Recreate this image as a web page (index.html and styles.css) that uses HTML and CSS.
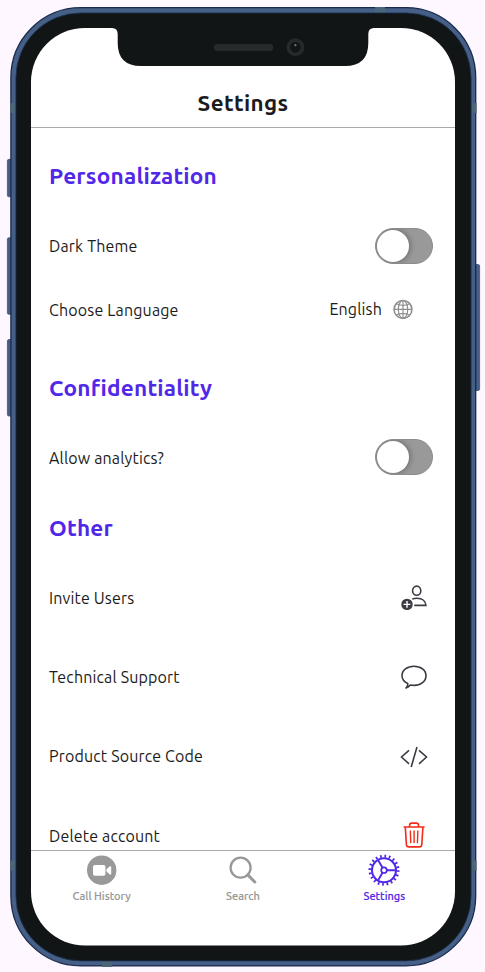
FILE: index.html
```html
<!DOCTYPE html>
<html lang="en">
<head>
<meta charset="utf-8">
<title>Settings</title>
<link rel="stylesheet" href="styles.css">
</head>
<body>
<div class="device">
  <svg class="frame" width="485" height="972" viewBox="0 0 485 972">
    <g fill="#455f86" stroke="#34496b" stroke-width=".7">
      <rect x="7.4" y="159.3" width="6" height="37.5" rx="1.5"/>
      <rect x="7.4" y="237.7" width="6" height="76.6" rx="1.5"/>
      <rect x="7.4" y="339.5" width="6" height="76.6" rx="1.5"/>
      <rect x="473" y="264.5" width="6.6" height="126" rx="1.5"/>
    </g>
    <rect x="10.9" y="7.7" width="464.8" height="958.2" rx="70" fill="#455f86" stroke="#182a4b" stroke-width="1.3"/>
    <g fill="#4b6579">
      <rect x="10.3" y="103" width="6" height="10"/><rect x="471" y="103" width="5.6" height="10"/>
      <rect x="10.3" y="860.5" width="6" height="10"/><rect x="471" y="860.5" width="5.6" height="10"/>
      <rect x="375" y="7" width="10" height="6"/><rect x="102" y="961" width="10" height="6"/>
    </g>
    <rect x="15.9" y="12.9" width="455.2" height="948" rx="65" fill="#111515" stroke="#20365a" stroke-width=".8"/>
    <rect x="31" y="28" width="424" height="917.5" rx="54" fill="#fff"/>
    <path d="M111 27.5V28h1Q117.7 28 117.7 34V43Q117.7 66 141 66H345Q368.3 66 368.3 43V34Q368.3 28 374 28V27.5Z" fill="#111515"/>
    <rect x="213.8" y="44" width="59.4" height="7" rx="3.5" fill="#262a2a"/>
    <circle cx="295.4" cy="47.2" r="7.1" fill="#111515" stroke="#262a2a" stroke-width="3.6"/>
    <circle cx="295.4" cy="45.2" r="1.1" fill="#777"/>
  </svg>
  <div class="screen">
    <header class="header"><h1 class="title">Settings</h1></header>
    <main class="content">
      <h2 class="section">Personalization</h2>
      <div class="row"><span class="label">Dark Theme</span><span class="switch"><i class="thumb"></i></span></div>
      <div class="row lang"><span class="label">Choose Language</span>
        <span class="value"><span class="label">English</span>
          <svg width="20" height="20" viewBox="0 0 20 20" fill="none" stroke="#8f8f8f" stroke-width="1.2"><circle cx="10" cy="10.4" r="8.9" stroke-width="1.6"/><ellipse cx="10" cy="10.4" rx="4.7" ry="8.9"/><path d="M10 1.4V19.4M1 10.4H19M3.3 4.8Q10 8 16.7 4.8M3.3 16Q10 12.8 16.7 16"/></svg>
        </span></div>
      <h2 class="section">Confidentiality</h2>
      <div class="row analytics"><span class="label low">Allow analytics?</span><span class="switch"><i class="thumb"></i></span></div>
      <h2 class="section other">Other</h2>
      <div class="row link"><span class="label">Invite Users</span>
        <svg width="28" height="28" viewBox="0 0 28 28" fill="none" stroke="#3d3a43" stroke-width="1.6"><ellipse cx="16.7" cy="6.7" rx="4.1" ry="4.6"/><path d="M12.2 15.1Q14 14.2 17 14.2C22.5 14.2 25.6 17.5 25.9 21.4H14.2"/><circle cx="7" cy="20.4" r="5.7" fill="#3d3a43" stroke="none"/><path d="M7 17V23.8M3.6 20.4H10.4" stroke="#fff" stroke-width="1.4"/></svg></div>
      <div class="row link"><span class="label">Technical Support</span>
        <svg width="28" height="28" viewBox="0 0 28 28" fill="none" stroke="#3d3a43" stroke-width="1.6" stroke-linejoin="round"><path d="M7.8 20.6C4.3 19 2 16.4 2 12.8 2 7.2 7.2 3.2 14 3.2S26 7.2 26 12.8 20.8 22.4 14 22.4Q12 22.4 10.3 22Q8.7 24 6 24.9Q7.9 23.3 7.8 20.6Z"/></svg></div>
      <div class="row link"><span class="label">Product Source Code</span>
        <svg width="28" height="28" viewBox="0 0 28 28" fill="none" stroke="#3d3a43" stroke-width="1.6"><path d="M9 8.4 1.5 15 9 21.8M19 8.4 26.5 15 19 21.8M17 5 11.2 25"/></svg></div>
      <div class="row link"><span class="label low">Delete account</span>
        <svg width="28" height="28" viewBox="0 0 28 28" fill="none" stroke="#f42b18" stroke-width="1.6" stroke-linejoin="round"><path d="M3.6 6H24.6M9.6 5.8V4.2Q9.6 2.1 11.7 2.1H16.4Q18.5 2.1 18.5 4.2V5.8M5.3 6.2 6.4 23.6Q6.6 25.9 8.8 25.9H19.4Q21.6 25.9 21.8 23.6L22.9 6.2"/><path d="M10.3 9.5 10.8 22.1M14.1 9.5V22.1M17.9 9.5 17.4 22.1" stroke-width="1.4"/></svg></div>
    </main>
    <nav class="nav">
      <div class="tab"><svg width="32" height="32" viewBox="0 0 32 32"><circle cx="15.7" cy="16.2" r="14.7" fill="#999"/><rect x="7" y="11" width="12.4" height="10.8" rx="1.8" fill="#fff"/><path d="M20.5 15.2 23.8 12.3Q25.2 11.8 25.2 13.2V19.7Q25.2 21 23.8 20.5L20.5 17.6Z" fill="#fff"/></svg><span class="caption">Call History</span></div>
      <div class="tab"><svg width="32" height="32" viewBox="0 0 32 32" fill="none" stroke="#999"><circle cx="13.6" cy="13.7" r="10" stroke-width="2.3"/><path d="M20.8 20.9 27.8 28" stroke-width="3" stroke-linecap="round"/></svg><span class="caption">Search</span></div>
      <div class="tab active"><svg width="32" height="32" viewBox="0 0 32 32" fill="none" stroke="#5128e8"><circle cx="16" cy="16.2" r="12" stroke-width="2"/><circle cx="16" cy="16.2" r="14.1" stroke-width="2.8" stroke-dasharray="1.7 2.73"/><circle cx="16" cy="16.2" r="2.8" stroke-width="1.7"/><path d="M18.8 16.2H28M14.6 13.8 10 5.9M14.6 18.6 10 26.5" stroke-width="1.9"/></svg><span class="caption">Settings</span></div>
    </nav>
  </div>
</div>
</body>
</html>
```
FILE: styles.css
```css
* { box-sizing: border-box; }
body { margin: 0; background: #fef7ff; font-family: Ubuntu, "Noto Sans", sans-serif; color: #1b1b20; }
.device { position: relative; width: 485px; height: 972px; padding: 28px 30px 0 31px; overflow: hidden; }
.frame { position: absolute; left: 0; top: 0; }
.screen { position: relative; width: 424px; height: 917px; display: flex; flex-direction: column; }
.header { height: 100px; padding-top: 59px; border-bottom: 1px solid #aaa; }
.title { margin: 0; font-size: 22.4px; line-height: 32px; font-weight: 700; text-align: center; letter-spacing: .35px; }
.content { height: 722px; padding: 30px 22px 0 18px; overflow: hidden; }
.section { margin: 0; height: 36px; font-size: 22.6px; line-height: 36px; font-weight: 700; color: #5128e8; letter-spacing: .2px; white-space: nowrap; }
.row { height: 60px; display: flex; align-items: center; justify-content: space-between; margin-top: 22px; }
.label { font-size: 16px; line-height: 24px; letter-spacing: .16px; white-space: nowrap; }
.low { padding-top: 2px; }
.lang { margin-top: 4px; margin-bottom: 30px; padding-right: 20px; }
.value { display: flex; align-items: center; gap: 11px; margin-top: -2px; }
.analytics { margin-bottom: 23px; margin-top: 21px; }
.link { height: 79px; margin-top: 0; padding-right: 5px; }
.other { margin-bottom: 12px; }
.switch { width: 58px; height: 36px; margin-right: .5px; padding: 1px; border-radius: 18px; background: #999; border: 1px solid #8c8c8c; overflow: hidden; }
.thumb { display: block; width: 32px; height: 32px; border-radius: 50%; background: #fff; box-shadow: 1px 0 5px 1px rgba(0,0,0,.25); }
.nav { height: 95px; border-top: 1px solid #aaa; display: grid; grid-template-columns: repeat(3, 1fr); padding-top: 3px; }
.tab { display: flex; flex-direction: column; align-items: center; color: #999; }
.caption { font-size: 11px; line-height: 16px; margin-top: 2px; font-weight: 500; -webkit-text-stroke: .15px currentColor; }
.active { color: #5128e8; }
```
